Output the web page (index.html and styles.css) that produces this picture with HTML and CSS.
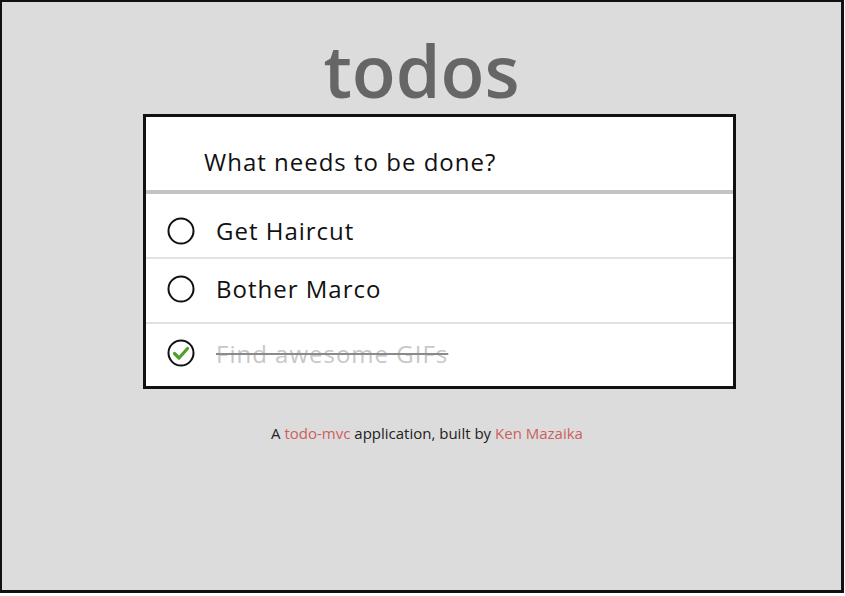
FILE: index.html
```html
<!DOCTYPE html>
<html>
<head>
<meta charset="utf-8">
<link rel="stylesheet" href="styles.css">
</head>
<body>
<div class="frame">
  <h1 class="title">todos</h1>
  <section class="card">
    <div class="new-todo">What needs to be done?</div>
    <ul class="list">
      <li class="item item-first">
        <span class="check"><svg width="28" height="28" viewBox="0 0 28 28"><circle cx="14" cy="14" r="12.5" fill="none" stroke="#111" stroke-width="2"/></svg></span>
        <span class="label">Get Haircut</span>
      </li>
      <li class="item item-second">
        <span class="check"><svg width="28" height="28" viewBox="0 0 28 28"><circle cx="14" cy="14" r="12.5" fill="none" stroke="#111" stroke-width="2"/></svg></span>
        <span class="label">Bother Marco</span>
      </li>
      <li class="item item-done">
        <span class="check"><svg width="28" height="28" viewBox="0 0 28 28"><circle cx="14" cy="14" r="12.5" fill="none" stroke="#111" stroke-width="2"/><path d="M7.5 14.5 L12 19 L20.5 9.5" fill="none" stroke="#4fa02a" stroke-width="3.2" stroke-linecap="round" stroke-linejoin="round"/></svg></span>
        <span class="label">Find awesome GIFs</span>
      </li>
    </ul>
  </section>
  <p class="footer">A <span class="link">todo-mvc</span> application, built by <span class="link">Ken Mazaika</span></p>
</div>
</body>
</html>
```
FILE: styles.css
```css
html, body {
  margin: 0;
  padding: 0;
  background: #ffffff;
}
body {
  font-family: "Open Sans", "Noto Sans", sans-serif;
}
.frame {
  box-sizing: border-box;
  width: 844px;
  height: 593px;
  background: #dcdcdc;
  border: 2px solid #111;
  border-right-width: 3px;
  border-bottom-width: 3px;
  display: flex;
  flex-direction: column;
  align-items: center;
}
.title {
  margin: 27px 0 0 0;
  height: 82px;
  font-size: 72px;
  line-height: 82px;
  font-weight: 600;
  color: #666666;
}
.card {
  box-sizing: border-box;
  align-self: flex-start;
  width: 593px;
  height: 275px;
  margin: 3px 0 0 141px;
  background: #ffffff;
  border: 3px solid #111;
  display: flex;
  flex-direction: column;
}
.new-todo {
  height: 77px;
  box-sizing: border-box;
  padding: 30px 0 0 58px;
  font-size: 24px;
  line-height: 30px;
  letter-spacing: 1px;
  color: #111;
  border-bottom: 4px solid #c4c4c4;
}
.list {
  list-style: none;
  margin: 0;
  padding: 0;
  flex: 1;
  display: flex;
  flex-direction: column;
}
.item {
  box-sizing: border-box;
  display: flex;
  align-items: center;
  padding: 0 0 4px 21px;
  border-top: 2px solid #e2e2e2;
  font-size: 24px;
  letter-spacing: 1px;
  color: #111;
}
.item-first {
  height: 63px;
  border-top: none;
  padding-top: 10px;
  padding-bottom: 0;
}
.item-second {
  height: 65px;
}
.item-done {
  flex: 1;
}
.check {
  width: 28px;
  height: 28px;
  display: flex;
}
.label {
  margin-left: 21px;
}
.item-done .label {
  color: #c8c8c8;
  text-decoration: line-through;
  text-decoration-color: #8a8a8a;
  text-decoration-thickness: 2px;
}
.footer {
  margin: 34px 0 0 11px;
  font-size: 15px;
  color: #222;
}
.link {
  color: #cc6060;
}
```
